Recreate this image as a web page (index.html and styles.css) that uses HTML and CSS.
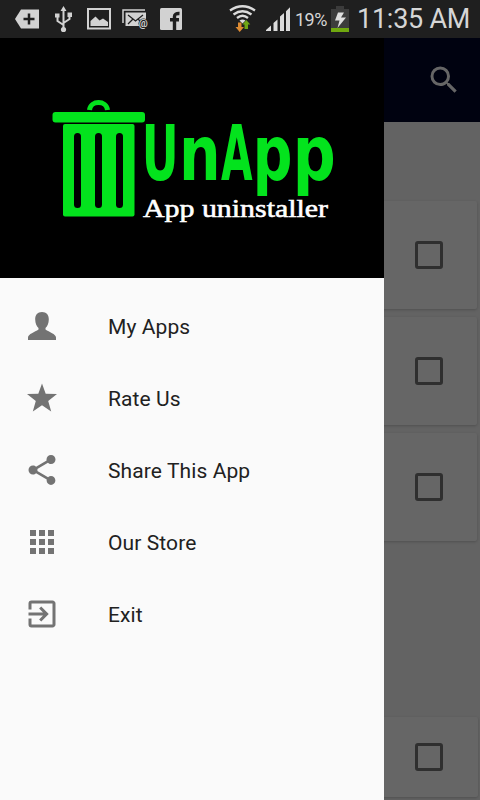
FILE: index.html
```
<!DOCTYPE html>
<html lang="en">
<head>
    <meta charset="UTF-8">
    <title>UnApp</title>
    <link rel="stylesheet" href="styles.css">
</head>
<body>
    <div class="status-bar">
        <svg class="status-icons" width="200" height="38" viewBox="0 0 200 38">
            <!-- tag -->
            <path fill="#d2d2d2" d="M15 19l6-9.500h18v19H21z"/>
            <path stroke="#1f1f1f" stroke-width="2.500" d="M23.500 19h11M29 13.500v11"/>
            <!-- usb -->
            <g fill="none" stroke="#d2d2d2" stroke-width="2">
                <path d="M63.500 9v20M63.500 25l-6-4v-5M63.500 23l6-4v-4"/>
            </g>
            <path fill="#d2d2d2" d="M63.500 6l3 5h-6zM55 13.500h4.500v4H55zM67.500 12.500H72v4.500h-4.500z"/>
            <circle cx="63.500" cy="29.500" r="2.600" fill="#d2d2d2"/>
            <!-- gallery -->
            <path fill="none" stroke="#d2d2d2" stroke-width="2" d="M88 9h22v19.500H88z"/>
            <path fill="#d2d2d2" d="M90.500 26v-5l5-4.500 4 4 3.500-2 5 3.500v4z"/>
            <!-- mail -->
            <path fill="none" stroke="#d2d2d2" stroke-width="1.500" d="M123 23V10h22"/>
            <path fill="#d2d2d2" d="M125.500 12.500H146V26h-20.500z"/>
            <path fill="none" stroke="#1f1f1f" stroke-width="1.300" d="M128 15l7.500 6 7.500-6M128 24l5-5M143 24l-5-5"/>
            <circle cx="143.500" cy="23.500" r="5" fill="#1f1f1f"/>
            <text class="at-sign" x="138.800" y="26.500">@</text>
            <!-- facebook -->
            <rect x="160" y="8" width="22" height="22" rx="1.500" fill="#d2d2d2"/>
            <path fill="none" stroke="#1f1f1f" stroke-width="3.400" d="M174.500 30V16.500q0-3.300 5-3M170 19.800h9"/>
        </svg>
        <div class="status-info">
            <svg width="64" height="38" viewBox="228 0 64 38">
                <g fill="none" stroke="#dcdcdc" stroke-width="2.300">
                    <path d="M230 10.500q12.500-8.500 25 0M233.500 14.500q9-6.500 18 0M237 18q5.500-4.500 11 0"/>
                </g>
                <path fill="#dcdcdc" d="M239.500 20.500q3-2 6 0l-3 3z"/>
                <path fill="#dd8b33" d="M238 22.500h3.500V27h2.500l-4.300 5-4.200-5h2.500z"/>
                <path fill="#70a615" d="M246.300 20l4 4.500H248V29h-3.500v-4.500h-2z"/>
                <path fill="#dcdcdc" d="M266 31v-1l5-4.500V31zM273.500 31v-8l4-3.500V31zM280 31V16.500l4-3.500v18zM286 31V11.300l4-4V31z"/>
            </svg>
            <span class="battery-level">19%</span>
            <svg class="battery" width="18" height="26" viewBox="0 0 18 26">
                <path fill="#3c3c3c" d="M5 0h8v3h5v23H0V3h5z"/>
                <path fill="#70a80f" d="M0 22h18v4H0z"/>
                <path fill="#dedede" d="M7 6.500h6l-3 5h5L6.500 22l2-7.500H4z"/>
            </svg>
            <span class="clock">11:35 AM</span>
        </div>
    </div>

    <div class="screen">
        <div class="app">
            <div class="toolbar">
                <svg width="36" height="36" viewBox="0 0 24 24">
                    <path fill="#fff" d="M15.500 14h-.79l-.28-.27A6.471 6.471 0 0 0 16 9.500 6.500 6.500 0 1 0 9.500 16c1.610 0 3.090-.59 4.230-1.570l.27.28v.79l5 4.990L20.490 19l-4.990-5zm-6 0C7.010 14 5 11.990 5 9.500S7.010 5 9.500 5 14 7.010 14 9.500 11.990 14 9.500 14z"/>
                </svg>
            </div>
            <div class="app-list">
                <div class="card"><span class="checkbox"></span></div>
                <div class="card"><span class="checkbox"></span></div>
                <div class="card"><span class="checkbox"></span></div>
            </div>
            <div class="card select-all"><span class="checkbox"></span></div>
        </div>

        <div class="scrim"></div>

        <div class="drawer">
            <div class="drawer-header">
                <svg width="384" height="240" viewBox="0 38 384 240">
                    <g fill="#03e31d">
                        <path fill="none" stroke="#03e31d" stroke-width="5" d="M89.500 110c1-10 17-10 18 0"/>
                        <rect x="52.500" y="112" width="92.500" height="10.500" rx="3"/>
                        <rect x="63" y="124" width="71.500" height="92.500" rx="2"/>
                    </g>
                    <g class="bin-slots">
                        <rect x="74" y="133" width="7" height="75" rx="3.500"/>
                        <rect x="95" y="133" width="7" height="75" rx="3.500"/>
                        <rect x="116" y="133" width="7" height="75" rx="3.500"/>
                    </g>
                    <g class="logo-name">
                        <text transform="translate(141.800 180) scale(.59 1)">U</text>
                        <text transform="translate(179 180) scale(.76 1)">n</text>
                        <text transform="translate(221 180) scale(.53 1)">A</text>
                        <text transform="translate(252.800 180) scale(.72 1)">p</text>
                        <text transform="translate(292.800 180) scale(.78 1)">p</text>
                    </g>
                    <text class="logo-tagline" x="143" y="217" textLength="185" lengthAdjust="spacingAndGlyphs">App uninstaller</text>
                </svg>
            </div>
            <div class="menu">
                <div class="menu-item">
                    <svg width="36" height="36" viewBox="0 0 36 36">
                        <path d="M18 4c-4.500 0-7 3-6.800 7.500.1 4 1.300 6.500 3.300 8.500v1.500C11 24 4 26 4 29.500V32h28v-2.500c0-3.500-7-5.500-10.500-8V20c2-2 3.200-4.500 3.300-8.500C25 7 22.500 4 18 4z"/>
                    </svg>
                    <span>My Apps</span>
                </div>
                <div class="menu-item">
                    <svg width="36" height="36" viewBox="0 0 36 36">
                        <path d="M18 3.500l3.700 10.200 11.300.3-8.800 7 3 10.500L18 25.300 8.800 31.500l3-10.500L3 14l11.300-.3z"/>
                    </svg>
                    <span>Rate Us</span>
                </div>
                <div class="menu-item">
                    <svg width="36" height="36" viewBox="0 0 24 24">
                        <path d="M18 16.080c-.76 0-1.440.3-1.960.77L8.910 12.700c.05-.23.09-.46.09-.7s-.04-.47-.09-.7l7.050-4.110c.54.5 1.250.81 2.040.81 1.660 0 3-1.340 3-3s-1.340-3-3-3-3 1.340-3 3c0 .24.04.47.09.7L8.040 9.810C7.500 9.310 6.790 9 6 9c-1.660 0-3 1.340-3 3s1.340 3 3 3c.79 0 1.500-.31 2.040-.81l7.120 4.160c-.05.21-.08.43-.08.65 0 1.610 1.310 2.920 2.920 2.920s2.920-1.310 2.920-2.920-1.310-2.920-2.920-2.920z"/>
                    </svg>
                    <span>Share This App</span>
                </div>
                <div class="menu-item">
                    <svg width="36" height="36" viewBox="0 0 24 24">
                        <path d="M4 8h4V4H4v4zm6 12h4v-4h-4v4zm-6 0h4v-4H4v4zm0-6h4v-4H4v4zm6 0h4v-4h-4v4zm6-10v4h4V4h-4zm-6 4h4V4h-4v4zm6 6h4v-4h-4v4zm0 6h4v-4h-4v4z"/>
                    </svg>
                    <span>Our Store</span>
                </div>
                <div class="menu-item">
                    <svg width="36" height="36" viewBox="0 0 24 24">
                        <path d="M10.090 15.590L11.500 17l5-5-5-5-1.410 1.410L12.670 11H3v2h9.670l-2.580 2.590zM19 3H5a2 2 0 0 0-2 2v4h2V5h14v14H5v-4H3v4a2 2 0 0 0 2 2h14c1.100 0 2-.9 2-2V5c0-1.100-.9-2-2-2z"/>
                    </svg>
                    <span>Exit</span>
                </div>
            </div>
        </div>
    </div>
</body>
</html>
```
FILE: styles.css
```
* {
    box-sizing: border-box;
}
body {
    margin: 0;
    width: 480px;
    height: 800px;
    overflow: hidden;
    font-family: Roboto, sans-serif;
    background: #000;
}
svg {
    display: block;
    flex-shrink: 0;
}
.status-bar {
    display: flex;
    justify-content: space-between;
    height: 38px;
    background: #1f1f1f;
    color: #d6d6d6;
}
.at-sign {
    font-size: 10px;
    font-weight: bold;
    fill: #d2d2d2;
}
.status-info {
    display: flex;
    align-items: center;
    width: 252px;
    white-space: nowrap;
}
.battery-level {
    width: 39px;
    padding-left: 3px;
    font-size: 18px;
    letter-spacing: -0.5px;
}
.battery {
    margin-top: -1px;
}
.clock {
    padding-left: 8px;
    font-size: 27px;
    letter-spacing: -0.25px;
}
.screen {
    position: relative;
    height: 762px;
}
.app {
    display: flex;
    flex-direction: column;
    height: 100%;
    background: #f7f7f7;
}
.toolbar {
    display: flex;
    align-items: center;
    justify-content: flex-end;
    height: 84px;
    padding-right: 18px;
    background: #000528;
}
.app-list {
    display: flex;
    flex: 1;
    flex-direction: column;
    gap: 8px;
    padding: 79px 3px 0;
}
.card {
    display: flex;
    align-items: center;
    justify-content: flex-end;
    height: 108px;
    padding-right: 34px;
    border-radius: 2px;
    background: #fff;
    box-shadow: 0 1px 3px rgba(0, 0, 0, 0.2);
}
.checkbox {
    width: 28px;
    height: 28px;
    border: 3px solid #757575;
    border-radius: 3px;
}
.select-all {
    height: 80px;
    margin: 0 2px 3px;
    padding-right: 35px;
}
.scrim {
    position: absolute;
    inset: 0;
    background: rgba(0, 0, 0, 0.6);
}
.drawer {
    position: absolute;
    top: 0;
    left: 0;
    width: 384px;
    height: 100%;
    background: #fafafa;
}
.drawer-header {
    height: 240px;
    background: #000;
}
.bin-slots {
    fill: #000;
}
.logo-name {
    font-family: "DejaVu Sans", sans-serif;
    font-size: 77px;
    font-weight: bold;
    fill: #03e31d;
}
.logo-tagline {
    font-family: "Liberation Serif", serif;
    font-size: 26px;
    fill: #fff;
    stroke: #fff;
    stroke-width: 0.6px;
}
.menu {
    padding-top: 12px;
}
.menu-item {
    display: flex;
    align-items: center;
    gap: 48px;
    height: 72px;
    padding-left: 24px;
    font-size: 21px;
    letter-spacing: 0.1px;
    color: #212121;
}
.menu-item svg {
    fill: #737373;
}
.menu-item span {
    padding-top: 2px;
}
```
